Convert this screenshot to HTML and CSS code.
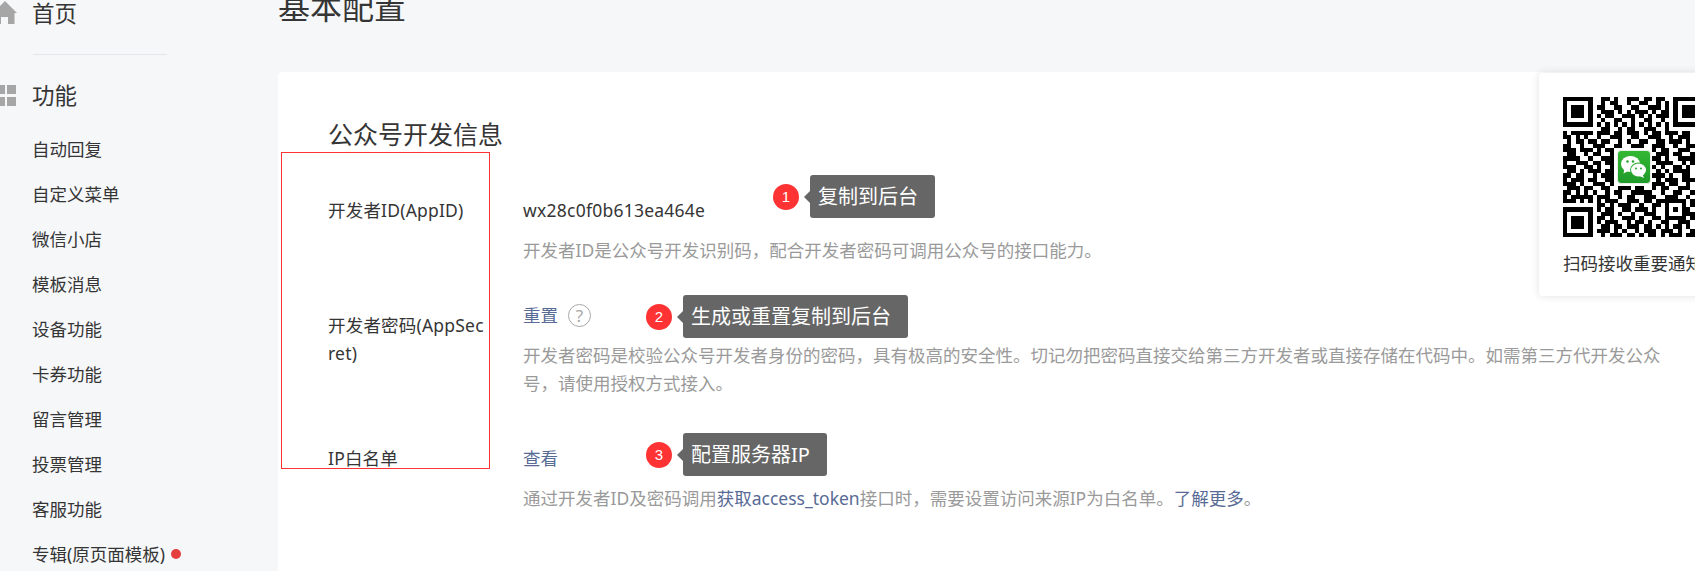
FILE: index.html
```html
<!DOCTYPE html>
<html lang="zh-CN">
<head>
    <meta charset="UTF-8">
    <title>基本配置</title>
    <link rel="stylesheet" href="styles.css">
</head>
<body>
    <div class="app">
        <!-- Sidebar -->
        <div class="sidebar">
            <div class="nav-head">
                <svg class="nav-icon" viewBox="0 0 24 24"><path d="M12 1 24 13h-2.500v11H15v-7H8v7H2.500V13H0z"/></svg>
                <span>首页</span>
            </div>
            <div class="nav-line"></div>
            <div class="nav-head">
                <svg class="nav-icon" viewBox="0 0 24 24"><path d="M3 3h9v9H3zM14 3h9v9h-9zM3 15h9v9H3zM14 15h9v9h-9z"/></svg>
                <span>功能</span>
            </div>
            <div class="nav-list">
                <div class="nav-item">自动回复</div>
                <div class="nav-item">自定义菜单</div>
                <div class="nav-item">微信小店</div>
                <div class="nav-item">模板消息</div>
                <div class="nav-item">设备功能</div>
                <div class="nav-item">卡券功能</div>
                <div class="nav-item">留言管理</div>
                <div class="nav-item">投票管理</div>
                <div class="nav-item">客服功能</div>
                <div class="nav-item">专辑(原页面模板)<span class="nav-dot"></span></div>
            </div>
        </div>

        <!-- Main -->
        <div class="main">
            <div class="page-title">基本配置</div>
            <div class="card">
                <div class="card-title">公众号开发信息</div>

                <div class="info-row">
                    <div class="info-label">开发者ID(AppID)</div>
                    <div class="info-body">
                        <div class="info-value info-value-id">wx28c0f0b613ea464e</div>
                        <div class="info-desc">开发者ID是公众号开发识别码，配合开发者密码可调用公众号的接口能力。</div>
                    </div>
                    <div class="callout callout-first">
                        <span class="callout-num">1</span>
                        <span class="callout-tip">复制到后台</span>
                    </div>
                </div>

                <div class="info-row">
                    <div class="info-label info-label-low">开发者密码(AppSecret)</div>
                    <div class="info-body">
                        <div class="info-value">
                            <span class="link">重置</span>
                            <span class="help">?</span>
                        </div>
                        <div class="info-desc">开发者密码是校验公众号开发者身份的密码，具有极高的安全性。切记勿把密码直接交给第三方开发者或直接存储在代码中。如需第三方代开发公众号，请使用授权方式接入。</div>
                    </div>
                    <div class="callout">
                        <span class="callout-num">2</span>
                        <span class="callout-tip">生成或重置复制到后台</span>
                    </div>
                </div>

                <div class="info-row info-row-last">
                    <div class="info-label">IP白名单</div>
                    <div class="info-body">
                        <div class="info-value"><span class="link">查看</span></div>
                        <div class="info-desc">通过开发者ID及密码调用<span class="link">获取access_token</span>接口时，需要设置访问来源IP为白名单。<span class="link">了解更多</span>。</div>
                    </div>
                    <div class="callout callout-last">
                        <span class="callout-num">3</span>
                        <span class="callout-tip">配置服务器IP</span>
                    </div>
                </div>

                <!-- Red annotation box -->
                <div class="mark-box"></div>

                <!-- QR popup -->
                <div class="qr-pop">
                    <div class="qr-wrap">
                        <svg class="qr-code" viewBox="0 0 33 33" shape-rendering="crispEdges">
                            <path fill="none" stroke="#000" d="M0 .5h7M9 .5h2M12 .5h1M15 .5h3M19 .5h2M22 .5h2M26 .5h7
                            M0 1.500h1M6 1.500h1M9 1.500h1M11 1.500h2M15 1.500h1M18 1.500h2M22 1.500h1M24 1.500h1M26 1.500h1M32 1.500h1
                            M0 2.500h1M2 2.500h3M6 2.500h1M8 2.500h2M12 2.500h2M16 2.500h2M20 2.500h3M24 2.500h1M26 2.500h1M28 2.500h3M32 2.500h1
                            M0 3.500h1M2 3.500h3M6 3.500h1M9 3.500h3M13 3.500h1M15 3.500h1M17 3.500h3M21 3.500h1M23 3.500h2M26 3.500h1M28 3.500h3M32 3.500h1
                            M0 4.500h1M2 4.500h3M6 4.500h1M8 4.500h1M10 4.500h2M14 4.500h3M18 4.500h1M20 4.500h1M22 4.500h3M26 4.500h1M28 4.500h3M32 4.500h1
                            M0 5.500h1M6 5.500h1M9 5.500h1M12 5.500h2M16 5.500h1M19 5.500h2M23 5.500h1M26 5.500h1M32 5.500h1
                            M0 6.500h7M8 6.500h1M10 6.500h1M12 6.500h1M14 6.500h1M16 6.500h1M18 6.500h1M20 6.500h1M22 6.500h1M24 6.500h1M26 6.500h7
                            M9 7.500h2M13 7.500h1M15 7.500h2M19 7.500h3M24 7.500h1
                            M0 8.500h1M2 8.500h4M6 8.500h1M8 8.500h3M12 8.500h2M15 8.500h3M19 8.500h1M21 8.500h2M24 8.500h3M28 8.500h2M31 8.500h2
                            M0 9.500h2M3 9.500h1M5 9.500h1M8 9.500h1M11 9.500h3M16 9.500h2M20 9.500h3M25 9.500h1M27 9.500h3M32 9.500h1
                            M1 10.500h1M3 10.500h2M6 10.500h2M9 10.500h2M13 10.500h1M15 10.500h1M18 10.500h2M22 10.500h2M25 10.500h3M29 10.500h1M31 10.500h2
                            M0 11.500h2M4 11.500h1M7 11.500h3M12 11.500h2M16 11.500h3M21 11.500h3M26 11.500h1M29 11.500h3
                            M0 12.500h3M4 12.500h3M8 12.500h1M10 12.500h2M21 12.500h1M23 12.500h2M27 12.500h3M31 12.500h2
                            M1 13.500h2M5 13.500h1M7 13.500h2M11 13.500h1M22 13.500h3M26 13.500h2M30 13.500h1
                            M0 14.500h4M6 14.500h1M9 14.500h3M21 14.500h2M24 14.500h1M27 14.500h4M32 14.500h1
                            M0 15.500h1M3 15.500h3M7 15.500h2M10 15.500h2M22 15.500h4M28 15.500h1M30 15.500h3
                            M0 16.500h3M5 16.500h2M8 16.500h1M11 16.500h1M21 16.500h1M23 16.500h1M26 16.500h2M29 16.500h1
                            M1 17.500h2M4 17.500h1M6 17.500h3M10 17.500h2M22 17.500h1M24 17.500h1M26 17.500h4M31 17.500h2
                            M0 18.500h2M3 18.500h2M7 18.500h1M9 18.500h3M21 18.500h3M25 18.500h1M28 18.500h2M32 18.500h1
                            M0 19.500h1M2 19.500h3M6 19.500h2M10 19.500h2M22 19.500h1M24 19.500h3M28 19.500h4
                            M0 20.500h3M4 20.500h1M7 20.500h3M11 20.500h1M21 20.500h3M25 20.500h2M29 20.500h1M31 20.500h2
                            M1 21.500h3M5 21.500h2M9 21.500h2M13 21.500h3M17 21.500h2M21 21.500h1M23 21.500h2M27 21.500h3M32 21.500h1
                            M0 22.500h2M3 22.500h1M5 22.500h1M7 22.500h1M10 22.500h1M12 22.500h2M16 22.500h5M23 22.500h1M26 22.500h2M30 22.500h2
                            M0 23.500h1M2 23.500h5M8 23.500h3M13 23.500h1M15 23.500h2M19 23.500h3M24 23.500h3M29 23.500h1M31 23.500h2
                            M0 24.500h3M4 24.500h1M6 24.500h1M8 24.500h1M10 24.500h3M15 24.500h3M19 24.500h2M22 24.500h7M30 24.500h1
                            M8 25.500h2M11 25.500h1M13 25.500h3M18 25.500h1M21 25.500h2M24 25.500h1M28 25.500h1M30 25.500h3
                            M0 26.500h7M8 26.500h1M10 26.500h2M14 26.500h2M17 26.500h3M21 26.500h1M24 26.500h1M26 26.500h1M28 26.500h2M31 26.500h1
                            M0 27.500h1M6 27.500h1M9 27.500h3M13 27.500h1M16 27.500h1M19 27.500h3M24 27.500h1M28 27.500h3
                            M0 28.500h1M2 28.500h3M6 28.500h1M8 28.500h2M11 28.500h1M14 28.500h3M18 28.500h1M21 28.500h2M24 28.500h5M30 28.500h1M32 28.500h1
                            M0 29.500h1M2 29.500h3M6 29.500h1M8 29.500h1M10 29.500h3M15 29.500h1M17 29.500h2M20 29.500h1M23 29.500h2M27 29.500h3M31 29.500h2
                            M0 30.500h1M2 30.500h3M6 30.500h1M9 30.500h2M12 30.500h2M15 30.500h3M19 30.500h2M22 30.500h1M24 30.500h1M26 30.500h2M29 30.500h1
                            M0 31.500h1M6 31.500h1M8 31.500h3M12 31.500h1M14 31.500h1M17 31.500h1M19 31.500h3M23 31.500h3M27 31.500h1M30 31.500h3
                            M0 32.500h7M9 32.500h1M11 32.500h3M15 32.500h2M18 32.500h1M20 32.500h2M23 32.500h1M25 32.500h3M29 32.500h2M32 32.500h1"/>
                        </svg>
                        <svg class="qr-logo" viewBox="0 0 34 34">
                            <defs>
                                <linearGradient id="wxGreen" x1="0" y1="0" x2="0" y2="1">
                                    <stop offset="0" stop-color="#33b833"/>
                                    <stop offset="1" stop-color="#1f9a2a"/>
                                </linearGradient>
                            </defs>
                            <rect x=".5" y=".5" width="33" height="33" rx="3.500" fill="url(#wxGreen)" stroke="#e8efe8"/>
                            <ellipse cx="13.500" cy="14" rx="9.500" ry="8" fill="#fff"/>
                            <path d="M7.500 18.500 6.500 23.500 12 20.500z" fill="#fff"/>
                            <ellipse cx="21.500" cy="20" rx="8.500" ry="7.500" fill="#2aa82f"/>
                            <ellipse cx="21.500" cy="20" rx="7.500" ry="6.500" fill="#fff"/>
                            <path d="M25.500 24.500 27 28 22.500 26z" fill="#fff"/>
                            <circle cx="10.500" cy="11.500" r="1.300" fill="#2aa82f"/>
                            <circle cx="16" cy="11.500" r="1.300" fill="#2aa82f"/>
                            <circle cx="19" cy="18.500" r="1" fill="#2aa82f"/>
                            <circle cx="24" cy="18.500" r="1" fill="#2aa82f"/>
                        </svg>
                    </div>
                    <div class="qr-text">扫码接收重要通知</div>
                </div>
            </div>
        </div>
    </div>
</body>
</html>
```

FILE: styles.css
```css
html, body {
    height: 100%;
}

body {
    margin: 0;
    background: #f6f7f9;
    color: #353535;
    font-family: 'Noto Sans', 'Noto Sans CJK SC', sans-serif;
    font-size: 17.5px;
    overflow: hidden;
}

.app {
    display: flex;
    margin-top: -15px;
}

/* Sidebar */
.sidebar {
    width: 278px;
    flex-shrink: 0;
    box-sizing: border-box;
    padding: 5px 0 0 32px;
    overflow: hidden;
}

.nav-head {
    display: flex;
    align-items: center;
    height: 44px;
    font-size: 22.500px;
}

.nav-icon {
    width: 24px;
    height: 24px;
    margin-left: -39px;
    margin-right: 15px;
    fill: #a6a6a6;
}

.nav-line {
    width: 134px;
    height: 1px;
    margin: 20px 0 17px 1px;
    background: #e4e6e9;
}

.nav-list {
    margin-top: 10px;
}

.nav-item {
    display: flex;
    align-items: center;
    height: 45px;
}

.nav-dot {
    width: 10px;
    height: 10px;
    margin-left: 6px;
    border-radius: 50%;
    background: #e53e3e;
}

/* Main */
.main {
    flex: 1;
    min-width: 0;
}

.page-title {
    height: 44px;
    line-height: 44px;
    margin-bottom: 43px;
    font-size: 32px;
}

.card {
    position: relative;
    height: 600px;
    box-sizing: border-box;
    padding: 44px 25px 0 50px;
    background: #fff;
    border-radius: 4px 0 0 0;
}

.card-title {
    height: 36px;
    line-height: 36px;
    margin-bottom: 44px;
    font-size: 25px;
}

/* Info rows */
.info-row {
    position: relative;
    display: flex;
    margin-bottom: 37px;
    line-height: 28px;
}

.info-row-last {
    padding-top: 10px;
}

.info-label {
    width: 156px;
    margin-right: 39px;
    flex-shrink: 0;
    word-break: break-all;
    letter-spacing: 0.2px;
}

.info-label-low {
    padding-top: 10px;
}

.info-body {
    flex: 1;
    min-width: 0;
}

.info-value {
    display: flex;
    align-items: center;
    height: 28px;
    margin-bottom: 12px;
}

.info-value-id {
    letter-spacing: 0.24px;
}

.info-desc {
    color: #9a9a9a;
}

.link {
    color: #576b95;
}

.help {
    width: 21px;
    height: 21px;
    margin-left: 10px;
    border: 1.500px solid #a8a8a8;
    border-radius: 50%;
    color: #a8a8a8;
    font-size: 17px;
    line-height: 21px;
    text-align: center;
}

/* Numbered notes drawn over the page */
.callout {
    position: absolute;
    top: -6px;
    left: 318px;
    display: flex;
    align-items: center;
    color: #fff;
}

.callout-first {
    top: -21px;
    left: 445px;
}

.callout-last {
    top: -1px;
}

.callout-num {
    width: 26px;
    height: 26px;
    margin-right: 11px;
    border-radius: 50%;
    background: #ff3333;
    font-family: 'Liberation Sans', sans-serif;
    font-size: 15px;
    line-height: 26px;
    text-align: center;
}

.callout-tip {
    position: relative;
    height: 43px;
    padding: 0 17px 0 8px;
    border-radius: 3px;
    background: #666;
    font-size: 20px;
    line-height: 43px;
    white-space: nowrap;
}

.callout-tip::before {
    content: "";
    position: absolute;
    top: 50%;
    left: -6px;
    margin-top: -6px;
    border-top: 6px solid transparent;
    border-bottom: 6px solid transparent;
    border-right: 6px solid #666;
}

.mark-box {
    position: absolute;
    top: 80px;
    left: 3px;
    width: 207px;
    height: 315px;
    border: 1px solid #ff3333;
}

/* QR popup */
.qr-pop {
    position: absolute;
    top: 1px;
    left: 1261px;
    width: 192px;
    height: 223px;
    box-sizing: border-box;
    padding: 24px;
    background: #fff;
    border-radius: 4px;
    box-shadow: 0 0 8px rgba(0,0,0,0.12);
}

.qr-wrap {
    position: relative;
    width: 140px;
    height: 140px;
}

.qr-code {
    display: block;
    width: 140px;
    height: 140px;
}

.qr-logo {
    position: absolute;
    top: 53px;
    left: 54px;
    width: 34px;
    height: 34px;
}

.qr-text {
    margin-top: 12px;
    line-height: 28px;
    white-space: nowrap;
}
```
